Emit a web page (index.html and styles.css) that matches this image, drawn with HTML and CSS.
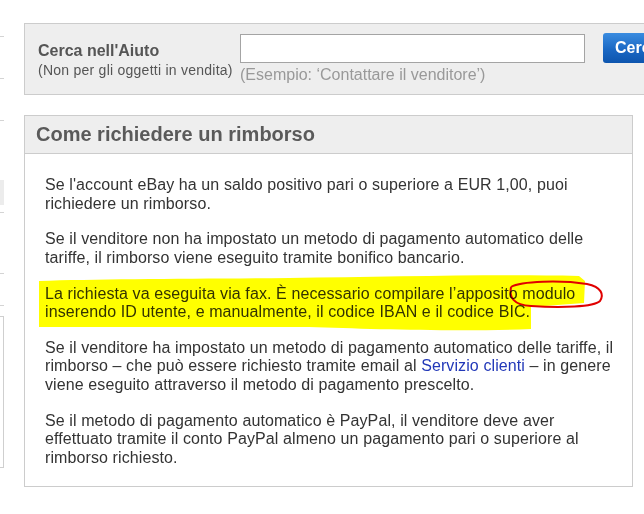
FILE: index.html
```html
<!DOCTYPE html>
<html lang="it">
<head>
<meta charset="utf-8">
<title>Come richiedere un rimborso</title>
<link rel="stylesheet" href="styles.css">
</head>
<body>
<div class="page">
  <div class="sidebar">
    <div class="sb-line h36"></div>
    <div class="sb-line h41"></div>
    <div class="sb-line h41"></div>
    <div class="sb-space"></div>
    <div class="sb-gray"></div>
    <div class="sb-line h7"></div>
    <div class="sb-line h60"></div>
    <div class="sb-line h31"></div>
    <div class="sb-box"></div>
  </div>
  <div class="main">
    <div class="search">
      <div class="search-label">
        <div class="search-title">Cerca nell'Aiuto</div>
        <div class="search-sub">(Non per gli oggetti in vendita)</div>
      </div>
      <div class="search-field">
        <div class="search-input"></div>
        <div class="search-hint">(Esempio: ‘Contattare il venditore’)</div>
      </div>
      <div class="search-btn">Cerca</div>
    </div>
    <div class="box">
      <div class="box-head">Come richiedere un rimborso</div>
      <div class="box-body">
        <p>Se l'account eBay ha un saldo positivo pari o superiore a EUR 1,00, puoi richiedere un rimborso.</p>
        <p>Se il venditore non ha impostato un metodo di pagamento automatico delle tariffe, il rimborso viene eseguito tramite bonifico bancario.</p>
        <p class="marked">La richiesta va eseguita via fax. È necessario compilare l’apposito modulo inserendo ID utente, e manualmente, il codice IBAN e il codice BIC.<svg class="highlight" width="580" height="70" viewBox="0 0 580 70"><path d="M0 4 C60 2 150 2 250 1 C350 0 450 -3 540 -1 L546 4 L545 26 L492 30 L492 52 C420 55 330 52 270 50 L0 50 Z" fill="#ffff00"/><path d="M472 10 C482 4 522 3 548 7 C563 10 565 18 561 24 C555 30 522 31 492 29 C474 28 470 20 472 10" fill="none" stroke="#e00000" stroke-width="2"/></svg></p>
        <p>Se il venditore ha impostato un metodo di pagamento automatico delle tariffe, il rimborso – che può essere richiesto tramite email al <a class="link">Servizio clienti</a> – in genere viene eseguito attraverso il metodo di pagamento prescelto.</p>
        <p>Se il metodo di pagamento automatico è PayPal, il venditore deve aver effettuato tramite il conto PayPal almeno un pagamento pari o superiore al rimborso richiesto.</p>
      </div>
    </div>
  </div>
</div>
</body>
</html>
```

FILE: styles.css
```css
html, body {
  margin: 0;
  padding: 0;
  background: #fff;
}
body {
  width: 644px;
  height: 514px;
  overflow: hidden;
  font-family: "Liberation Sans", Arial, sans-serif;
  color: #333;
}
.page {
  display: flex;
  align-items: flex-start;
}
.sidebar {
  width: 4px;
  flex: none;
}
.sb-line {
  border-bottom: 1px solid #d4d4d4;
}
.h36 { height: 36px; }
.h41 { height: 41px; }
.h7 { height: 7px; }
.h60 { height: 60px; }
.h31 { height: 31px; }
.sb-space { height: 59px; }
.sb-gray { height: 25px; background: #ececec; }
.sb-box {
  margin-top: 10px;
  height: 150px;
  border: 1px solid #cfcfcf;
  border-left: none;
  width: 3px;
}
.main {
  margin-left: 20px;
  padding-top: 23px;
  width: 660px;
  flex: none;
}
.search {
  height: 72px;
  box-sizing: border-box;
  border: 1px solid #cccccc;
  background: #eeeeee;
  display: flex;
  align-items: flex-start;
  padding-left: 13px;
}
.search-label {
  width: 202px;
  padding-top: 18px;
  color: #555;
}
.search-title {
  font-size: 16px;
  font-weight: bold;
  line-height: 18px;
}
.search-sub {
  font-size: 14px;
  letter-spacing: 0.25px;
  line-height: 16px;
  margin-top: 2px;
}
.search-field {
  padding-top: 10px;
}
.search-input {
  width: 345px;
  height: 29px;
  box-sizing: border-box;
  border: 1px solid #a4a4a4;
  background: #fff;
}
.search-hint {
  margin-top: 3px;
  font-size: 16px;
  line-height: 18px;
  color: #999;
}
.search-btn {
  margin-left: 18px;
  margin-top: 9px;
  height: 30px;
  width: 80px;
  box-sizing: border-box;
  border-radius: 3px;
  background: linear-gradient(#3a8ce0, #1a68c4 55%, #0d55ae);
  color: #fff;
  font-weight: bold;
  font-size: 16px;
  line-height: 30px;
  padding-left: 12px;
}
.box {
  margin-top: 20px;
  width: 609px;
  box-sizing: border-box;
  border: 1px solid #cccccc;
}
.box-head {
  height: 38px;
  box-sizing: border-box;
  border-bottom: 1px solid #cccccc;
  background: #eeeeee;
  padding-left: 11px;
  font-size: 20px;
  font-weight: bold;
  line-height: 37px;
  color: #5a5a5a;
}
.box-body {
  padding: 22px 12px 19px 20px;
  font-size: 16px;
  letter-spacing: 0.1px;
  line-height: 18.5px;
  color: #333;
}
.box-body p {
  margin: 0 0 17.25px 0;
}
.box-body p:last-child {
  margin-bottom: 0;
}
.marked {
  position: relative;
}
.highlight {
  position: absolute;
  left: -6px;
  top: -8px;
  mix-blend-mode: multiply;
  pointer-events: none;
  overflow: visible;
}
.link {
  color: #2238b8;
  text-decoration: none;
}
```
